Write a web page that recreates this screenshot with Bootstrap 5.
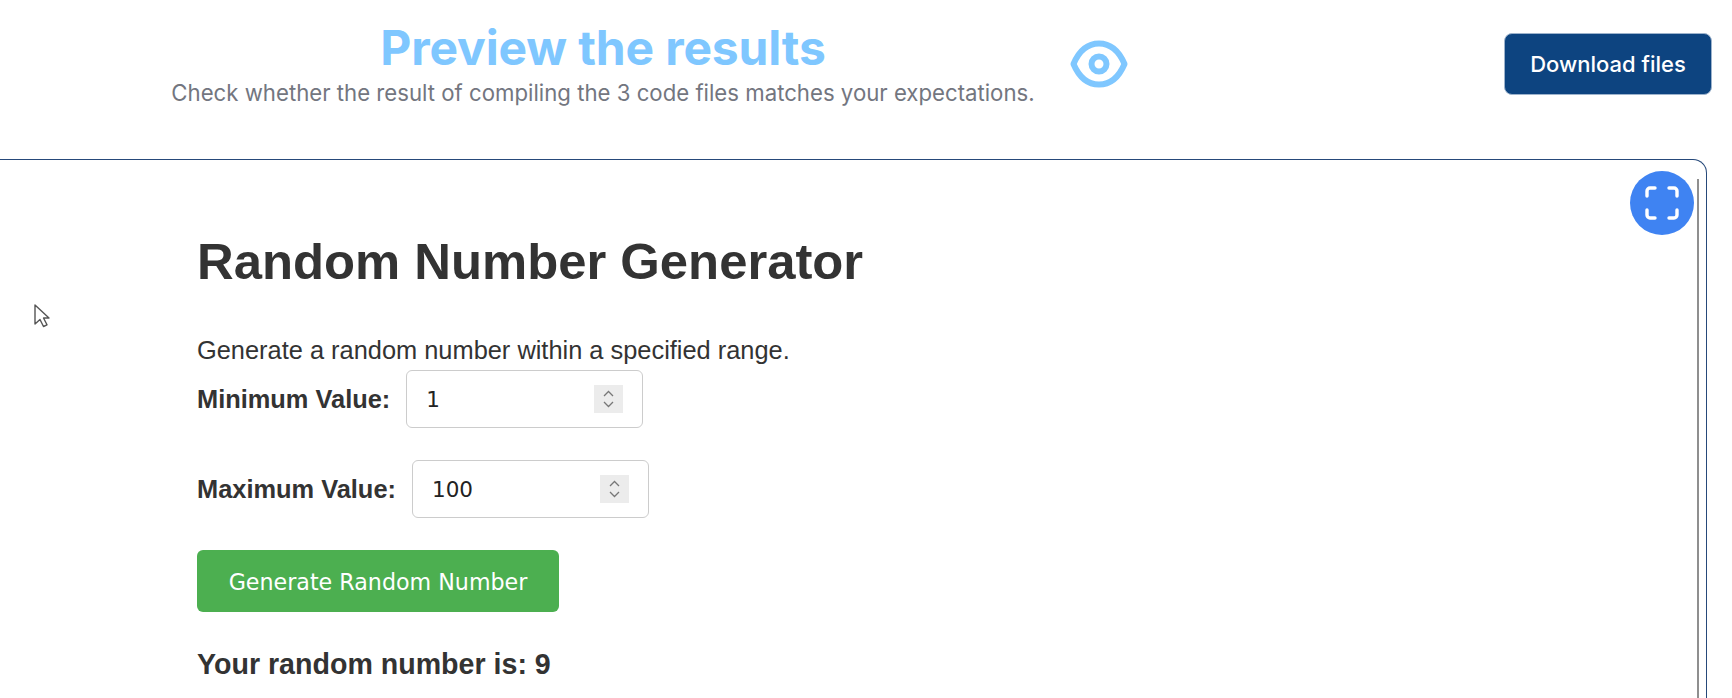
<!DOCTYPE html>
<html lang="en">
<head>
    <meta charset="UTF-8">
    <meta name="viewport" content="width=device-width, initial-scale=1.0">
    <title>Preview the results</title>
    <link href="https://cdn.jsdelivr.net/npm/bootstrap@5.3.0/dist/css/bootstrap.min.css" rel="stylesheet">
    <style>
        html, body {
            height: 100%;
            overflow: hidden;
        }
        body {
            background-color: #fff;
            font-family: "Liberation Sans", Arial, sans-serif;
            color: #333;
        }
        .page-head {
            height: 159px;
            padding: 33px 20px 0 171px;
        }
        .head-text {
            width: 864px;
            font-family: Inter, sans-serif;
        }
        .head-title {
            font-size: 48px;
            font-weight: 700;
            line-height: 1;
            color: #7fc7ff;
            margin: -9px 0 0;
            letter-spacing: -0.15px;
        }
        .head-sub {
            font-size: 22.2px;
            line-height: 28px;
            color: #73767f;
            margin: 7px 0 0;
            white-space: nowrap;
        }
        .eye-icon {
            margin: 1px 0 0 34px;
        }
        .btn-download {
            width: 208px;
            height: 62px;
            background-color: #0d4480;
            color: #fff;
            border: 1px solid #9db3cc;
            border-radius: 8px;
            font-family: Inter, sans-serif;
            font-size: 22px;
            font-weight: 500;
        }
        .preview-frame {
            width: 1723px;
            height: 539px;
            margin-left: -16px;
            border: 1.5px solid #26497a;
            border-bottom: 0;
            border-radius: 14px 14px 0 0;
            padding: 73px 0 0 212px;
        }
        .fullscreen-btn {
            top: 11px;
            right: 12px;
            width: 64px;
            height: 64px;
            background-color: #3f83f2;
        }
        .frame-scroll {
            top: 19px;
            right: 7px;
            bottom: 0;
            width: 2px;
            background-color: #8f8f8f;
        }
        .page-cursor {
            left: 33px;
            top: 303px;
        }
        .gen-title {
            font-size: 50.8px;
            font-weight: 700;
            line-height: 58px;
            margin: 0 0 45px;
            color: #333;
        }
        .gen-desc {
            font-size: 25.4px;
            line-height: 28px;
            margin: 0 0 6px;
        }
        .gen-row {
            margin-bottom: 32px;
        }
        .gen-label {
            font-size: 25.4px;
            font-weight: 700;
            margin-right: 16px;
        }
        .num-box {
            height: 58px;
            width: 237px;
            border: 1px solid #ccc;
            border-radius: 6px;
            padding: 0 19px 0 19px;
        }
        .num-box input {
            border: 0;
            outline: 0;
            padding: 3px 0 0;
            min-width: 0;
            flex: 1;
            font-family: "DejaVu Sans", sans-serif;
            font-size: 21.5px;
            color: #222;
        }
        .num-spin {
            width: 29px;
            height: 28px;
            background-color: #ececec;
        }
        .btn-generate {
            width: 362px;
            height: 62px;
            background-color: #4caf50;
            color: #fff;
            border: 0;
            border-radius: 6px;
            padding: 3px 0 0;
            font-family: "DejaVu Sans", sans-serif;
            font-size: 22.2px;
        }
        .gen-result {
            font-size: 28.6px;
            font-weight: 700;
            line-height: 34px;
            margin-top: 35px;
        }
    </style>
</head>
<body>

    <!-- Header -->
    <div class="page-head d-flex align-items-start">
        <div class="head-text text-center">
            <h1 class="head-title">Preview the results</h1>
            <p class="head-sub">Check whether the result of compiling the 3 code files matches your expectations.</p>
        </div>
        <svg class="eye-icon" width="60" height="60" viewBox="0 0 24 24" fill="none" stroke="#7fc7ff" stroke-width="2.4" stroke-linecap="round" stroke-linejoin="round">
            <path d="M1.800 12C4 6.800 7.600 3.800 12 3.800s8 3 10.200 8.200c-2.200 5.200-5.800 8.200-10.200 8.200S4 17.200 1.800 12z"/>
            <circle cx="12" cy="12" r="3"/>
        </svg>
        <button class="btn btn-download ms-auto p-0" type="button">Download files</button>
    </div>

    <!-- Preview -->
    <div class="preview-frame position-relative">
        <button class="fullscreen-btn btn rounded-circle position-absolute d-flex align-items-center justify-content-center p-0" type="button" aria-label="Fullscreen">
            <svg width="36" height="36" viewBox="0 0 36 36" fill="none" stroke="#fff" stroke-width="3.4" stroke-linecap="round" stroke-linejoin="round">
                <path d="M3 11V6a3 3 0 0 1 3-3h5M25 3h5a3 3 0 0 1 3 3v5M33 25v5a3 3 0 0 1-3 3h-5M11 33H6a3 3 0 0 1-3-3v-5"/>
            </svg>
        </button>
        <div class="frame-scroll position-absolute"></div>

        <h2 class="gen-title">Random Number Generator</h2>
        <p class="gen-desc">Generate a random number within a specified range.</p>

        <div class="gen-row d-flex align-items-center">
            <label class="gen-label" for="minValue">Minimum Value:</label>
            <div class="num-box d-flex align-items-center">
                <input id="minValue" type="text" value="1">
                <span class="num-spin d-flex align-items-center justify-content-center">
                    <svg width="15" height="22" viewBox="0 0 15 22" fill="none" stroke="#777" stroke-width="1.3"><path d="M3 8l4.500-4.500L12 8M3 14l4.500 4.500L12 14"/></svg>
                </span>
            </div>
        </div>
        <div class="gen-row d-flex align-items-center">
            <label class="gen-label" for="maxValue">Maximum Value:</label>
            <div class="num-box d-flex align-items-center">
                <input id="maxValue" type="text" value="100">
                <span class="num-spin d-flex align-items-center justify-content-center">
                    <svg width="15" height="22" viewBox="0 0 15 22" fill="none" stroke="#777" stroke-width="1.3"><path d="M3 8l4.500-4.500L12 8M3 14l4.500 4.500L12 14"/></svg>
                </span>
            </div>
        </div>

        <button class="btn btn-generate" type="button">Generate Random Number</button>
        <div class="gen-result">Your random number is: 9</div>
    </div>

    <svg class="page-cursor position-absolute" width="18" height="26" viewBox="0 0 18 26" fill="#fff" stroke="#555" stroke-width="1.4" stroke-linejoin="round">
        <path d="M2 2v19l5-4.500 3.500 7 3.500-1.700-3.500-6.800H16z"/>
    </svg>

</body>
</html>
